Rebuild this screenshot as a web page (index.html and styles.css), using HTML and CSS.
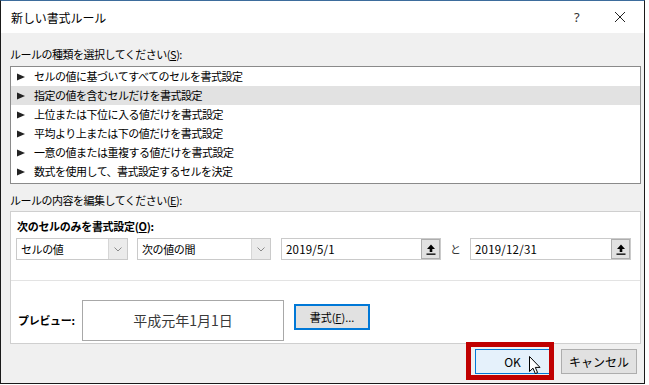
FILE: index.html
```html
<!DOCTYPE html>
<html lang="ja">
<head>
<meta charset="utf-8">
<title>新しい書式ルール</title>
<link rel="stylesheet" href="styles.css">
</head>
<body>
<div class="dialog">
  <div class="titlebar">
    <span class="title">新しい書式ルール</span>
    <span class="help">?</span>
    <span class="close"><svg width="12" height="12" viewBox="0 0 12 12"><path d="M1 1L11 11M11 1L1 11" stroke="#222" stroke-width="1" fill="none"/></svg></span>
  </div>
  <div class="body">
    <div class="label l1">ルールの種類を選択してください(<u>S</u>):</div>
    <ul class="list">
      <li><svg class="tri" width="8" height="8" viewBox="0 0 8 8"><path d="M0 0.5L8 4L0 7.5Z" fill="#222"/></svg>セルの値に基づいてすべてのセルを書式設定</li>
      <li class="sel"><svg class="tri" width="8" height="8" viewBox="0 0 8 8"><path d="M0 0.5L8 4L0 7.5Z" fill="#222"/></svg>指定の値を含むセルだけを書式設定</li>
      <li><svg class="tri" width="8" height="8" viewBox="0 0 8 8"><path d="M0 0.5L8 4L0 7.5Z" fill="#222"/></svg>上位または下位に入る値だけを書式設定</li>
      <li><svg class="tri" width="8" height="8" viewBox="0 0 8 8"><path d="M0 0.5L8 4L0 7.5Z" fill="#222"/></svg>平均より上または下の値だけを書式設定</li>
      <li><svg class="tri" width="8" height="8" viewBox="0 0 8 8"><path d="M0 0.5L8 4L0 7.5Z" fill="#222"/></svg>一意の値または重複する値だけを書式設定</li>
      <li><svg class="tri" width="8" height="8" viewBox="0 0 8 8"><path d="M0 0.5L8 4L0 7.5Z" fill="#222"/></svg>数式を使用して、書式設定するセルを決定</li>
    </ul>
    <div class="label l2">ルールの内容を編集してください(<u>E</u>):</div>
    <div class="panel">
      <div class="upper">
        <div class="bold">次のセルのみを書式設定(<u>O</u>):</div>
        <div class="controls">
          <div class="select s1"><span class="val">セルの値</span><span class="arrow"><svg width="8" height="5" viewBox="0 0 8 5"><path d="M0.5 0.5L4 4L7.5 0.5" stroke="#8a8a8a" fill="none"/></svg></span></div>
          <div class="select s2"><span class="val">次の値の間</span><span class="arrow"><svg width="8" height="5" viewBox="0 0 8 5"><path d="M0.5 0.5L4 4L7.5 0.5" stroke="#8a8a8a" fill="none"/></svg></span></div>
          <div class="input i1"><span class="val">2019/5/1</span><span class="ref"><svg width="10" height="11" viewBox="0 0 10 11"><path d="M5 0.5L9 5H6.3V8H3.7V5H1Z" fill="#000"/><rect x="0.5" y="9.5" width="9" height="1.3" fill="#000"/></svg></span></div>
          <span class="to">と</span>
          <div class="input i2"><span class="val">2019/12/31</span><span class="ref"><svg width="10" height="11" viewBox="0 0 10 11"><path d="M5 0.5L9 5H6.3V8H3.7V5H1Z" fill="#000"/><rect x="0.5" y="9.5" width="9" height="1.3" fill="#000"/></svg></span></div>
        </div>
      </div>
      <div class="lower">
        <span class="bold plabel">プレビュー:</span>
        <div class="preview">平成元年1月1日</div>
        <button class="btn fmt">書式(<u>F</u>)...</button>
      </div>
    </div>
    <div class="buttons">
      <button class="btn ok">OK</button>
      <button class="btn cancel">キャンセル</button>
    </div>
  </div>
  <div class="highlight"></div>
  <svg class="cursor" width="12" height="19" viewBox="0 0 12 19"><path d="M0.5 0.5V15.5L4 12.2L6.3 17.6L8.6 16.6L6.3 11.4H11Z" fill="#fff" stroke="#000" stroke-width="1" stroke-linejoin="round"/></svg>
</div>
</body>
</html>
```

FILE: styles.css
```css
* { box-sizing: border-box; }
html, body { margin: 0; padding: 0; background: #fff; }
body {
  font-family: "Noto Sans CJK JP", "Noto Sans", sans-serif;
  font-size: 11px;
  color: #000;
}
u { text-decoration: underline; text-underline-offset: 1px; }
.dialog {
  position: relative;
  width: 645px;
  height: 384px;
  border: 1px solid #1a1a1a;
  border-top-color: #3d6c9c;
  background: #f0f0f0;
  display: flex;
  flex-direction: column;
}
.titlebar {
  height: 32px;
  background: #fff;
  display: flex;
  align-items: center;
  padding-left: 10px;
  flex: none;
}
.title { font-size: 12px; letter-spacing: -0.1px; flex: 1; }
.help { font-size: 13px; color: #333; width: 14px; margin-right: 26px; font-family: "Noto Sans", sans-serif; }
.close { width: 12px; height: 12px; margin-right: 18px; display: flex; }
.body {
  padding: 0 3px 0 9px;
  display: flex;
  flex-direction: column;
}
.label { height: 16px; line-height: 16px; letter-spacing: -0.5px; }
.l1 { margin-top: 13px; }
.list {
  list-style: none;
  margin: 4px 0 0 0;
  padding: 0;
  height: 118px;
  background: #fff;
  border: 1px solid #8a8a8a;
}
.list li {
  height: 19px;
  line-height: 19px;
  display: flex;
  align-items: center;
  padding-left: 6px;
  letter-spacing: -0.5px;
}
.list li.sel { background: #e2e2e2; }
.tri { margin-right: 9px; flex: none; }
.l2 { margin-top: 8px; }
.panel {
  margin-top: 3px;
  height: 133px;
  background: #fff;
  border: 1px solid #cfcfcf;
  display: flex;
  flex-direction: column;
}
.upper {
  height: 69px;
  padding: 6px 0 0 5px;
  border-bottom: 1px solid #e3e3e3;
}
.bold { font-weight: bold; height: 16px; line-height: 16px; padding-left: 1px; letter-spacing: -0.3px; }
.controls {
  margin-top: 4px;
  display: flex;
  align-items: center;
  height: 22px;
}
.select, .input {
  height: 22px;
  border: 1px solid #cacaca;
  background: #fff;
  display: flex;
  align-items: center;
}
.val { flex: 1; padding-left: 4px; letter-spacing: -0.4px; }
.s1 { width: 112px; }
.s2 { width: 134px; margin-left: 9px; }
.arrow {
  width: 19px;
  height: 20px;
  background: #ebebeb;
  border-left: 1px solid #d6d6d6;
  display: flex;
  align-items: center;
  justify-content: center;
}
.i1 { width: 160px; margin-left: 10px; }
.i2 { width: 161px; }
.input .val { letter-spacing: 0.2px; font-size: 11.5px; }
.ref {
  width: 19px;
  height: 20px;
  background: #e1e1e1;
  border: 1px solid #adadad;
  display: flex;
  align-items: center;
  justify-content: center;
}
.to { width: 29px; text-align: center; color: #333; }
.lower {
  flex: 1;
  display: flex;
  align-items: center;
  padding: 18px 0 2px 6px;
}
.plabel { width: 65px; }
.preview {
  width: 202px;
  height: 41px;
  border: 1px solid #a8a8a8;
  display: flex;
  align-items: center;
  justify-content: center;
  font-size: 14px;
  color: #3a3a3a;
}
.btn {
  font-family: inherit;
  font-size: 11px;
  color: #000;
  padding: 0;
  height: 25px;
  display: flex;
  align-items: center;
  justify-content: center;
}
.fmt {
  width: 76px;
  height: 26px;
  margin-left: 10px;
  background: #e1e1e1;
  border: 1px solid #0078d7;
  box-shadow: inset 0 0 0 1px #0078d7;
  margin-top: -6px;
}
.buttons {
  margin-top: 5px;
  display: flex;
  justify-content: flex-end;
  gap: 11px;
  padding-right: 4px;
}
.ok {
  width: 75px;
  background: #e5f1fb;
  border: 1px solid #0078d7;
  font-size: 12px;
}
.cancel {
  width: 76px;
  background: #e1e1e1;
  border: 1px solid #adadad;
  font-size: 12px;
}
.highlight {
  position: absolute;
  left: 465px;
  top: 341px;
  width: 88px;
  height: 38px;
  border: 5px solid #c00000;
}
.cursor {
  position: absolute;
  left: 528px;
  top: 355px;
}
```
